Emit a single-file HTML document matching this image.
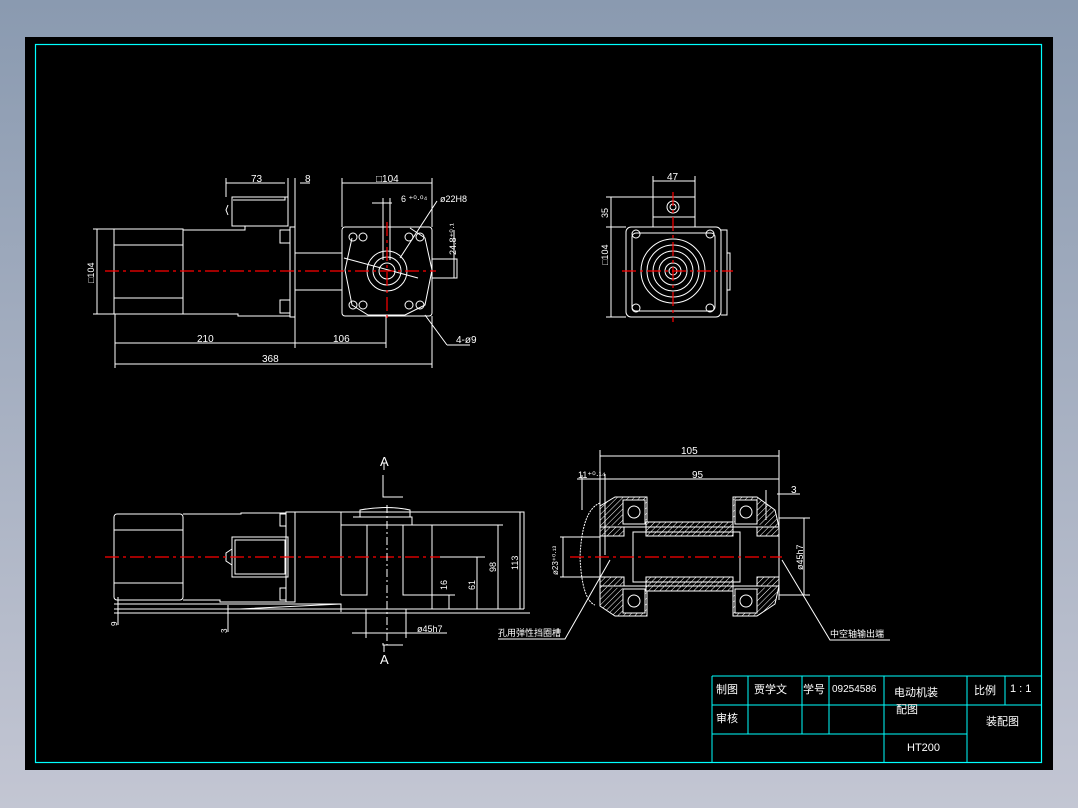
<!DOCTYPE html>
<html><head><meta charset="utf-8"><style>
html,body{margin:0;padding:0;width:1078px;height:808px;overflow:hidden;background:linear-gradient(#8a9ab0,#c3c6d3);}
svg{position:absolute;left:0;top:0}
text{font-family:"Liberation Sans","Noto Sans CJK SC",sans-serif;fill:#fff;}
</style></head><body>
<svg width="1078" height="808" viewBox="0 0 1078 808">
<defs>
<pattern id="h" width="4" height="4" patternUnits="userSpaceOnUse" patternTransform="rotate(45)"><line x1="0" y1="0" x2="0" y2="4" stroke="#fff" stroke-width="1"/></pattern>
</defs>
<rect x="25" y="37" width="1028" height="733" fill="#000"/>
<rect x="35.5" y="44.5" width="1006" height="718" fill="none" stroke="#0ff" stroke-width="1.2"/>

<g stroke="#fff" stroke-width="1" fill="none">
<!-- VIEW 1 -->
<rect x="114" y="229" width="69" height="85"/>
<line x1="114" y1="245" x2="183" y2="245"/><line x1="114" y1="298" x2="183" y2="298"/>
<path d="M183 230 H245 V226 H288 M183 314 H238 V316 H290"/>
<rect x="232" y="197" width="56" height="29"/>
<path d="M233 200 H285 V197 M228 205 L226 210 L228 215"/>
<rect x="290" y="227" width="5" height="90"/>
<path d="M280 230 h10 v13 h-10z M280 300 h10 v13 h-10z"/>
<path d="M295 253 H342 M295 290 H342"/>
<rect x="342" y="227" width="90" height="89" rx="3"/>
<path d="M352 238 L345 270 L352 305 L368 315 H405 L425 305 L432 270 L425 238 L410 228"/>
<circle cx="387" cy="271" r="20"/><circle cx="387" cy="271" r="14"/><circle cx="387" cy="271" r="8"/>
<circle cx="353" cy="237" r="4"/><circle cx="363" cy="237" r="4"/><circle cx="409" cy="237" r="4"/><circle cx="420" cy="237" r="4"/>
<circle cx="353" cy="305" r="4"/><circle cx="363" cy="305" r="4"/><circle cx="409" cy="305" r="4"/><circle cx="420" cy="305" r="4"/>
<path d="M432 259 H457 V278 H432 M383 198 V260 M390 198 V260"/>
<!-- dims view1 -->
<path d="M226 183 H285 M226 178 V197 M288 178 V226 M295 178 V227 M300 183 H310"/>
<path d="M342 183 H432 M342 178 V227 M432 178 V227"/>
<path d="M97 229 V314 M93 229 H114 M93 314 H114"/>
<path d="M115 343 H386 M115 364 H432 M115 314 V368 M295 317 V348 M386 316 V348 M432 316 V368"/>
<path d="M372 203 H392 M454 230 V278 M437 201 L400 258 M447 345 H470 M447 345 L425 315 M344 258 L418 278"/>
<!-- VIEW 2 -->
<rect x="626" y="227" width="95" height="90" rx="5"/>
<rect x="632" y="233" width="83" height="78" rx="4"/>
<path d="M721 230 H727 V315 H721 M727 253 H730 V290 H727"/>
<rect x="653" y="197" width="42" height="30"/>
<path d="M653 217 H695"/>
<circle cx="673" cy="207" r="6"/><circle cx="673" cy="207" r="3"/>
<circle cx="673" cy="271" r="32"/><circle cx="673" cy="271" r="26"/><circle cx="673" cy="271" r="20"/><circle cx="673" cy="271" r="14"/><circle cx="673" cy="271" r="8"/><circle cx="673" cy="271" r="4"/>
<circle cx="636" cy="234" r="4"/><circle cx="710" cy="234" r="4"/><circle cx="636" cy="308" r="4"/><circle cx="710" cy="308" r="4"/>
<path d="M653 181 H695 M653 176 V197 M695 176 V197 M611 197 V317 M606 197 H653 M606 227 H626 M606 317 H626"/>
<!-- VIEW 3 -->
<rect x="114" y="514" width="69" height="86" rx="3"/>
<line x1="114" y1="530" x2="183" y2="530"/><line x1="114" y1="583" x2="183" y2="583"/>
<path d="M183 514 H241 V513 H286 M183 600 H220 V602 H286"/>
<rect x="232" y="537" width="56" height="40"/><rect x="235" y="540" width="50" height="34"/>
<path d="M232 549 L226 553 L226 561 L232 565"/>
<rect x="286" y="512" width="9" height="90"/>
<path d="M280 514 h6 v12 h-6z M280 588 h6 v12 h-6z"/>
<path d="M295 512 H524 V609 M341 512 V595 M341 525 H503 M367 525 V595 H341 M403 525 V595 H432 M432 525 V609 M353 517 H412 V525 M360 517 V510 Q387 505 410 510 V517"/>
<path d="M114 609 H524 M114 613 H530 M240 609 L341 604 V612 M114 604 H341"/>
<path d="M366 609 V638 M406 609 V638 M352 633 H447 M383 475 V497 H403 M383 643 V645 H403"/>
<path d="M384 463 V470 M384 645 V652"/>
<path d="M520 512 V609 M498 525 V609 M477 557 V609 M449 595 V609 M432 557 H485 M432 595 H455"/>
<path d="M118 597 V625 M228 605 V632"/>
<!-- VIEW 4 -->
<path d="M600 456 H779 M600 450 V600 M779 450 V600 M577 479 H779 M582 475 V510 M605 474 V555 M777 494 H800 M766 490 V520"/>
<rect x="600" y="527" width="179" height="59"/>
<rect x="633" y="532" width="107" height="50"/>
<rect x="600" y="527" width="24" height="9" fill="url(#h)"/>
<rect x="646" y="522" width="87" height="14" fill="url(#h)"/>
<rect x="757" y="527" width="22" height="9" fill="url(#h)"/>
<rect x="600" y="577" width="24" height="9" fill="url(#h)"/>
<rect x="646" y="577" width="87" height="14" fill="url(#h)"/>
<rect x="757" y="577" width="22" height="9" fill="url(#h)"/>
<path d="M600 527 V506 L615 497 H647 V522 M600 586 V606 L615 616 H647 V591" fill="url(#h)"/>
<path d="M733 522 V497 H757 L775 510 L779 527 M733 591 V616 H757 L775 604 L779 586" fill="url(#h)"/>
<rect x="623" y="500" width="22" height="24" fill="#000"/><rect x="623" y="589" width="22" height="24" fill="#000"/>
<rect x="735" y="500" width="22" height="24" fill="#000"/><rect x="735" y="589" width="22" height="24" fill="#000"/>
<circle cx="634" cy="512" r="6"/><circle cx="634" cy="601" r="6"/><circle cx="746" cy="512" r="6"/><circle cx="746" cy="601" r="6"/>
<path d="M600 503 Q582 510 580 557 Q582 600 595 605" stroke-dasharray="2 1"/>
<path d="M560 537 H600 M560 577 H600 M563 537 V577 M779 518 H810 M779 595 H810 M804 518 V595"/>
<path d="M610 560 L565 639 H498 M782 560 L830 640 H890"/>
<!-- title block -->
</g>
<g stroke="#0ff" stroke-width="1" fill="none">
<path d="M712 676 H1042 M712 705 H967 M967 705 H1042 M712 734 H967 M712 676 V763 M748 676 V734 M802 676 V734 M829 676 V734 M884 676 V763 M967 676 V763 M1005 676 V705"/>
</g>
<g stroke="#f00" stroke-width="1.2" stroke-dasharray="14 4 3 4">
<line x1="105" y1="271" x2="436" y2="271"/><line x1="387" y1="222" x2="387" y2="320"/>
<line x1="622" y1="271" x2="733" y2="271"/><line x1="673" y1="192" x2="673" y2="322"/>
<line x1="105" y1="557" x2="440" y2="557"/>
<line x1="570" y1="557" x2="782" y2="557"/>
</g>
<g stroke="#fff" stroke-width="1" stroke-dasharray="8 3 2 3"><line x1="387" y1="505" x2="387" y2="645"/></g>
<g font-size="10">
<text x="251" y="182">73</text><text x="305" y="182">8</text><text x="376" y="182">□104</text>
<text x="401" y="202" font-size="9">6 ⁺⁰·⁰⁴</text><text x="440" y="202" font-size="9">ø22H8</text>
<text x="197" y="342">210</text><text x="333" y="342">106</text><text x="262" y="362">368</text>
<text x="456" y="343">4-ø9</text>
<text x="667" y="180">47</text>
<text x="380" y="466" font-size="13">A</text><text x="380" y="664" font-size="13">A</text>
<text x="417" y="632" font-size="9">ø45h7</text>
<text x="681" y="454">105</text><text x="692" y="478">95</text><text x="578" y="478" font-size="9">11⁺⁰·¹⁴</text><text x="791" y="493">3</text>
<text x="498" y="636" font-size="9">孔用弹性挡圈槽</text><text x="830" y="637" font-size="9">中空轴输出端</text>
<text transform="translate(608,265) rotate(-90)" font-size="9">□104</text>
<text transform="translate(608,218) rotate(-90)" font-size="9">35</text>
<text transform="translate(94,283) rotate(-90)" font-size="9">□104</text>
<text transform="translate(456,255) rotate(-90)" font-size="9">24.8⁺⁰·¹</text>
<text transform="translate(518,570) rotate(-90)" font-size="9">113</text>
<text transform="translate(496,572) rotate(-90)" font-size="9">98</text>
<text transform="translate(475,590) rotate(-90)" font-size="9">61</text>
<text transform="translate(447,590) rotate(-90)" font-size="9">16</text>
<text transform="translate(803,570) rotate(-90)" font-size="9">ø45h7</text>
<text transform="translate(558,575) rotate(-90)" font-size="8">ø23⁺⁰·¹³</text>
<text transform="translate(117,626) rotate(-90)" font-size="8">9</text>
<text transform="translate(227,633) rotate(-90)" font-size="8">3</text>
</g>
<g font-size="11">
<text x="716" y="693">制图</text><text x="754" y="693">贾学文</text><text x="803" y="693">学号</text><text x="832" y="692" font-size="10">09254586</text>
<text x="894" y="696">电动机装</text><text x="896" y="713">配图</text>
<text x="974" y="694">比例</text><text x="1010" y="692">1 : 1</text>
<text x="716" y="722">审核</text><text x="986" y="725">装配图</text>
<text x="907" y="751">HT200</text>
</g>
</svg>
</body></html>
